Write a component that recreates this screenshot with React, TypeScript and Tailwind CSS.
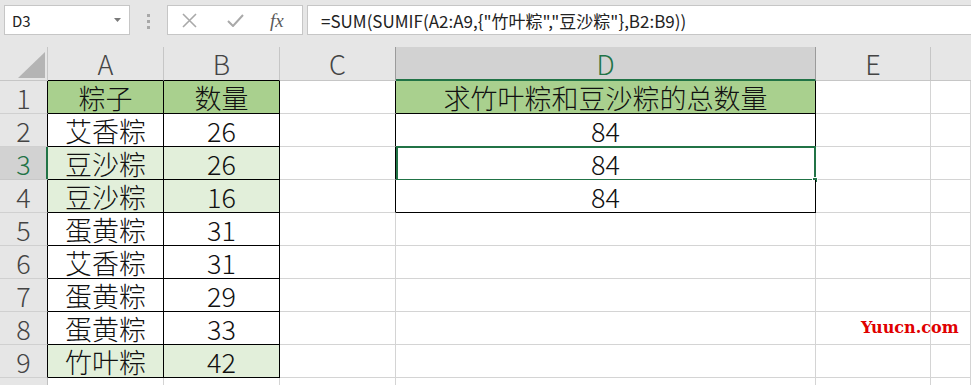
import React from "react";

const rows: string[][] = [
  ["粽子", "数量", "", "求竹叶粽和豆沙粽的总数量"],
  ["艾香粽", "26", "", "84"],
  ["豆沙粽", "26", "", "84"],
  ["豆沙粽", "16", "", "84"],
  ["蛋黄粽", "31", "", ""],
  ["艾香粽", "31", "", ""],
  ["蛋黄粽", "29", "", ""],
  ["蛋黄粽", "33", "", ""],
  ["竹叶粽", "42", "", ""],
  ["", "", "", ""],
];

const formula = '=SUM(SUMIF(A2:A9,{"竹叶粽","豆沙粽"},B2:B9))';

function rowHeaderCls(r: number) {
  if (r === 3)
    return "flex items-center justify-center bg-[#d2d2d2] text-[#217346] border-b border-r border-b-[#c8c8c8] border-r-[#217346] shadow-[inset_-1px_0_0_#217346]";
  if (r <= 9)
    return "flex items-center justify-center bg-[#e6e6e6] text-[#444444] border-b border-r border-b-[#d0d0d0] border-r-black";
  return "flex items-center justify-center bg-[#e6e6e6] text-[#444444] border-b border-r border-b-[#d0d0d0] border-r-[#c0c0c0]";
}

function abCls(r: number) {
  if (r === 1)
    return "flex items-center justify-center bg-[#a9d08e] text-[#111] border-b border-r border-b-black border-r-black";
  if (r === 3 || r === 4 || r === 9)
    return "flex items-center justify-center bg-[#e2efda] text-[#111] border-b border-r border-b-black border-r-black";
  if (r <= 9)
    return "flex items-center justify-center bg-white text-[#111] border-b border-r border-b-black border-r-black";
  return "flex items-center justify-center bg-white border-b border-r border-b-[#d4d4d4] border-r-[#d4d4d4]";
}

function cCls(r: number) {
  if (r <= 4) return "bg-white border-b border-r border-b-[#d4d4d4] border-r-black";
  return "bg-white border-b border-r border-b-[#d4d4d4] border-r-[#d4d4d4]";
}

function dCls(r: number) {
  if (r === 1)
    return "relative flex items-center justify-center bg-[#a9d08e] text-[#111] border-b border-r border-b-black border-r-black";
  if (r <= 4)
    return "relative flex items-center justify-center bg-white text-[#111] border-b border-r border-b-black border-r-black";
  return "relative bg-white border-b border-r border-b-[#d4d4d4] border-r-[#d4d4d4]";
}

const plainCls = "bg-white border-b border-r border-b-[#d4d4d4] border-r-[#d4d4d4]";

export default function App() {
  return (
    <div className="relative h-[385px] w-[971px] overflow-hidden bg-white font-['Noto_Sans_CJK_SC','Noto_Sans',sans-serif]">
      {/* Toolbar */}
      <div className="flex h-[47px] items-start bg-[#e6e6e6] pl-[4px] pt-[5px]">
        <div className="flex h-[30px] w-[126px] items-center justify-between border border-[#c6c6c6] bg-white pl-[7px] pr-[8px]">
          <span className="text-[15px] leading-none text-[#222]">D3</span>
          <svg width="7" height="4" viewBox="0 0 7 4">
            <path d="M0 0 L7 0 L3.5 4 Z" fill="#7a7a7a" />
          </svg>
        </div>
        <div className="ml-[17px] mt-[9px] flex flex-col gap-[3px]">
          <div className="h-[3px] w-[3px] bg-[#a8a8a8]" />
          <div className="h-[3px] w-[3px] bg-[#a8a8a8]" />
          <div className="h-[3px] w-[3px] bg-[#a8a8a8]" />
        </div>
        <div className="ml-[17px] flex h-[30px] w-[136px] items-center border border-[#c6c6c6] bg-white">
          <svg className="ml-[14px]" width="15" height="15" viewBox="0 0 15 15">
            <path d="M1 1 L14 14 M14 1 L1 14" stroke="#a9a9a9" strokeWidth="1.6" fill="none" />
          </svg>
          <svg className="ml-[30px]" width="17" height="13" viewBox="0 0 17 13">
            <path d="M1 7 L6 12 L16 1" stroke="#a9a9a9" strokeWidth="2" fill="none" />
          </svg>
          <span className="ml-[26px] font-['Liberation_Serif',serif] text-[19px] italic leading-none text-[#5a5a5a]">
            fx
          </span>
        </div>
        <div className="ml-[4px] flex h-[30px] flex-1 items-center border border-r-0 border-[#c6c6c6] bg-white pl-[13px]">
          <span className="text-[17px] leading-none text-[#222]">{formula}</span>
        </div>
      </div>

      {/* Grid */}
      <div className="grid grid-cols-[48px_116px_116px_116px_420px_115px_1fr] grid-rows-[34px_repeat(10,33px)] text-[27px] font-light leading-none">
        {/* Column headers */}
        <div className="relative border-b border-r border-b-[#c6c6c6] border-r-[#c6c6c6] bg-[#e6e6e6]">
          <svg className="absolute left-[18px] top-[5px]" width="27" height="26" viewBox="0 0 27 26">
            <path d="M27 0 L27 26 L0 26 Z" fill="#b4b4b4" />
          </svg>
        </div>
        <div className="flex items-center justify-center border-b border-r border-b-black border-r-[#c6c6c6] bg-[#e6e6e6] text-[#444]">A</div>
        <div className="flex items-center justify-center border-b border-r border-b-black border-r-[#c6c6c6] bg-[#e6e6e6] text-[#444]">B</div>
        <div className="flex items-center justify-center border-b border-r border-b-[#c6c6c6] border-r-[#9b9b9b] bg-[#e6e6e6] text-[#444]">C</div>
        <div className="flex items-center justify-center border-b-2 border-r border-b-[#217346] border-r-[#9b9b9b] bg-[#d2d2d2] text-[#217346]">D</div>
        <div className="flex items-center justify-center border-b border-r border-b-[#c6c6c6] border-r-[#c6c6c6] bg-[#e6e6e6] text-[#444]">E</div>
        <div className="border-b border-b-[#c6c6c6] bg-[#e6e6e6]" />

        {rows.map((row, i) => {
          const r = i + 1;
          return (
            <React.Fragment key={r}>
              <div className={rowHeaderCls(r)}>{r <= 9 ? r : ""}</div>
              <div className={abCls(r)}>{row[0]}</div>
              <div className={abCls(r)}>{row[1]}</div>
              <div className={cCls(r)} />
              <div className={dCls(r)}>
                {row[3]}
                {r === 3 && (
                  <>
                    <div className="pointer-events-none absolute -top-px left-0 -right-px -bottom-[2px] border-2 border-[#217346]" />
                    <div className="absolute left-[416px] top-[30px] h-[6px] w-[6px] border border-white bg-[#217346]" />
                  </>
                )}
              </div>
              <div className={plainCls} />
              <div className={plainCls} />
            </React.Fragment>
          );
        })}
      </div>

      {/* Watermark */}
      <div className="absolute left-[861px] top-[320px] font-['DejaVu_Serif',serif] text-[16px] font-bold leading-none text-[#e00000]">
        Yuucn.com
      </div>
    </div>
  );
}
